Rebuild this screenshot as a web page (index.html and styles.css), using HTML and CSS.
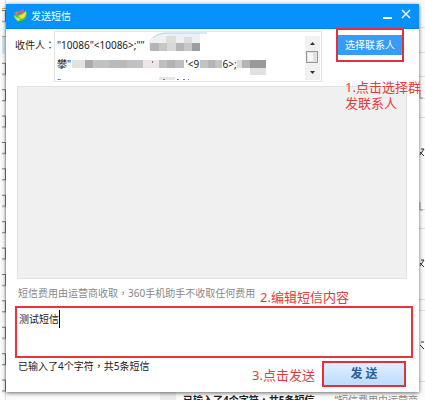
FILE: index.html
```
<!DOCTYPE html>
<html lang="zh-CN">
<head>
    <meta charset="utf-8">
    <meta name="viewport" content="width=device-width, initial-scale=1">
    <title>发送短信</title>
    <link rel="stylesheet" href="styles.css">
</head>
<body>
    <!-- list window behind the dialog -->
    <div class="backdrop" aria-hidden="true">
        <svg class="edge-left" width="6" height="400">
            <defs>
                <pattern id="ticks" x="0" y="9" width="6" height="26.4" patternUnits="userSpaceOnUse">
                    <path d="M5.5 12V26.4" stroke="#ddd"/>
                    <path d="M2 1.5H5.5V12.5H2" fill="none" stroke="#777"/>
                </pattern>
            </defs>
            <rect width="6" height="400" fill="url(#ticks)"/>
            <path d="M2 8.5H6" stroke="#e8a060"/>
            <rect x="2" y="37" width="4" height="17" fill="#cfe6f6"/>
        </svg>
        <svg class="edge-right" width="6" height="400">
            <path d="M0 27.5H6M0 52.5H6M0 76.5H6M0 98.5H6M0 117.5H6M0 209.5H6M0 228.5H6M0 299.5H6M0 310.5H6M0 381.5H6" stroke="#ddd"/>
            <path d="M1 90V98H4M1 202V210H4" fill="none" stroke="#999"/>
            <path d="M2 149H5M1 152L5 156M5 149L1 155M2 260H5M1 263L5 267M5 260L1 266M2 342H5M1 345L5 349" stroke="#333"/>
        </svg>
        <div class="edge-bottom">
            <span class="behind-status">已输入了4个字符<span class="mark" lang="zh-TW">，</span>共5条短信</span>
            <span class="behind-note">“短信费用由运营商</span>
        </div>
    </div>

    <main class="dialog">
        <header class="title-bar">
            <svg class="logo" width="13" height="14" viewBox="0 0 13 14">
                <path d="M3 3L10 0L10 4L3 6Z" fill="#c95a9d"/>
                <path d="M0 4L4 2L3 6Z" fill="#c98b45"/>
                <path d="M0 6Q5 7 12 2Q14 6 11 10Q7 15 3 12Q0 9 0 6Z" fill="#58c832"/>
                <path d="M4 7Q9 6 12 2Q13 7 8 10Z" fill="#f4e23c"/>
                <path d="M0 6Q3 10 7 9L5 12Q1 11 0 6Z" fill="#b8ec60"/>
                <path d="M3 12Q7 13 11 10Q8 15 3 12Z" fill="#25a239"/>
            </svg>
            <h1>发送短信</h1>
            <button class="window-button" type="button" aria-label="最小化">
                <svg width="10" height="12"><path d="M0 10H9" stroke="#fff" stroke-width="2"/></svg>
            </button>
            <button class="window-button" type="button" aria-label="关闭">
                <svg width="10" height="12"><path d="M1 2L9 10M9 2L1 10" stroke="#fff" stroke-width="1.4"/></svg>
            </button>
        </header>

        <form class="message-form">
            <div class="recipient-row">
                <label for="recipients">收件人<span class="mark" lang="zh-TW">：</span></label>
                <div class="recipient-box">
                    <textarea id="recipients" wrap="off">"10086"&lt;10086&gt;;""
攀"                                            '&lt;9         6&gt;;
"</textarea>
                    <!-- masked names and numbers -->
                    <svg class="mask" width="216" height="48" shape-rendering="crispEdges">
                        <path d="M94 18V9Q98 2 109 1H145V18Z" fill="#edf1f3"/>
                        <path d="M98 6Q103 1 112 1H152" fill="none" stroke="#abd5ec" shape-rendering="auto"/>
                        <path d="M95 11H104V19H95ZM121 11H129V19H121Z" fill="#b5b5b5"/>
                        <path d="M104 11H112V19H104ZM129 11H137V19H129Z" fill="#c7c7c7"/>
                        <path d="M112 11H121V19H112Z" fill="#d8d8d8"/>
                        <path d="M111 4H121V11H111ZM129 5H137V11H129Z" fill="#dedede"/>
                        <path d="M137 11H145V19H137Z" fill="#999fa3"/>
                        <path d="M17 28H30V36H17Z" fill="#e3e3e3"/>
                        <path d="M30 28H38V36H30Z" fill="#aaa"/>
                        <path d="M38 28H88V36H38Z" fill="#c2c2c2"/>
                        <path d="M54 28H72V36H54Z" fill="#bababa"/>
                        <path d="M88 28H104V36H88Z" fill="#ece6e6"/>
                        <path d="M97 29H98V31H97Z" fill="#a66"/>
                        <path d="M104 28H129V36H104Z" fill="#bfbfbf"/>
                        <path d="M112 28H120V36H112Z" fill="#b2b2b2"/>
                        <path d="M145 28H167V36H145Z" fill="#c4c4c4"/>
                        <path d="M153 28H160V36H153Z" fill="#b6b6b6"/>
                        <path d="M182 28H187V36H182Z" fill="#ddd"/>
                        <path d="M187 28H195V36H187Z" fill="#b5b5b5"/>
                        <path d="M195 28H211V36H195Z" fill="#999"/>
                        <path d="M195 36H211V43H195Z" fill="#e1e1e1"/>
                        <path d="M104 45H120V48H104Z" fill="#e6e6e6"/>
                        <path d="M108 47H110M122 47H124M128 47H130M133 47H134" stroke="#777"/>
                    </svg>
                    <svg class="scroller" width="15" height="44">
                        <rect width="15" height="44" fill="#f1f1f1"/>
                        <path d="M5 9L7.5 6L10 9ZM5 35L7.5 38L10 35Z" fill="#333"/>
                        <rect x="1.5" y="15.5" width="11" height="11" fill="#e2e2e2" stroke="#999"/>
                        <rect x="3" y="17" width="5" height="8" fill="#f7f7f7"/>
                    </svg>
                </div>
                <div class="callout">
                    <button class="contacts-button" type="button">选择联系人</button>
                </div>
            </div>

            <div class="history"></div>
            <p class="fee-note">短信费用由运营商收取<span class="mark" lang="zh-TW">，</span>360手机助手不收取任何费用</p>

            <div class="editor">
                <textarea id="message" aria-label="短信内容">测试短信</textarea>
                <span class="caret"></span>
            </div>

            <div class="footer-row">
                <p>已输入了4个字符<span class="mark" lang="zh-TW">，</span>共5条短信</p>
                <span class="hint">3.点击发送</span>
                <button class="send-button" type="button">发 送</button>
            </div>
        </form>

        <p class="hint hint-contacts">1.点击选择群<br>发联系人</p>
        <p class="hint hint-message">2.编辑短信内容</p>
    </main>
</body>
</html>
```
FILE: styles.css
```
* {
    box-sizing: border-box;
}

body {
    margin: 0;
    padding: 4px 6px 8px;
    min-height: 100vh;
    display: flex;
    overflow: hidden;
    position: relative;
    background-color: #fbfbfb;
    font-family: "Noto Sans", "Noto Sans CJK SC", sans-serif;
    font-size: 10px;
    line-height: 16px;
    color: #222;
}

h1, p {
    margin: 0;
}

button, textarea {
    font: inherit;
    color: inherit;
}

/* centred full-width punctuation */
.mark {
    font-family: "Noto Sans CJK TC", sans-serif;
    line-height: 1;
}

/* window behind */
.backdrop {
    position: absolute;
    inset: 0;
    overflow: hidden;
}

.edge-left {
    position: absolute;
    left: 0;
    top: 0;
}

.edge-right {
    position: absolute;
    right: 0;
    top: 0;
}

.edge-bottom {
    position: absolute;
    left: 160px;
    right: 0;
    bottom: 0;
    height: 8px;
    padding-left: 7px;
    border-left: 16px solid #ececec;
    display: flex;
    gap: 20px;
    overflow: hidden;
    white-space: nowrap;
}

.behind-status {
    font-weight: bold;
    color: #222;
}

.behind-note {
    color: #888;
}

/* dialog */
.dialog {
    flex: 1;
    display: flex;
    flex-direction: column;
    position: relative;
    background-color: #fff;
    box-shadow: 0 1px 4px rgba(0, 0, 0, 0.6);
}

.title-bar {
    height: 25px;
    padding: 0 6px 0 8px;
    display: flex;
    align-items: center;
    gap: 4px;
    background-color: #0792fb;
    border-bottom: 1px solid #0784e2;
    color: #fff;
}

.title-bar h1 {
    flex: 1;
    font-size: 10px;
    font-weight: normal;
}

.window-button {
    width: 14px;
    height: 20px;
    padding: 0 2px;
    border: 0;
    background: none;
}

.message-form {
    flex: 1;
    display: flex;
    flex-direction: column;
    padding: 2px 6px 5px 9px;
}

.recipient-row {
    display: flex;
    align-items: flex-start;
}

.recipient-row label {
    width: 39px;
    padding-top: 6px;
    white-space: nowrap;
}

.recipient-box {
    flex: 1;
    height: 51px;
    margin-right: 14px;
    position: relative;
    border: 1px solid #e4e4e4;
}

.recipient-box textarea {
    display: block;
    width: 100%;
    height: 48px;
    padding: 4px 2px 0;
    border: 0;
    resize: none;
    overflow: hidden;
    background: none;
    line-height: 19px;
}

.mask {
    position: absolute;
    left: 0;
    top: 0;
}

.scroller {
    position: absolute;
    right: 1px;
    top: 4px;
}

.callout {
    margin: -3px 9px 0 0;
    padding: 5px 0;
    border: 2px solid #e0303a;
}

.contacts-button {
    display: block;
    width: 64px;
    height: 20px;
    padding: 0;
    border: 0;
    background-color: #379cf5;
    color: #fff;
}

.history {
    flex: 1;
    margin: 4px 6px 6px 2px;
    background-color: #f0f0f0;
    border: 1px solid #e2e2e2;
}

.fee-note {
    margin: 0 0 5px 3px;
    color: #888;
}

.editor {
    height: 52px;
    position: relative;
    border: 2px solid #e8343a;
}

.editor textarea {
    display: block;
    width: 100%;
    height: 100%;
    padding: 3px 2px;
    border: 0;
    resize: none;
    background: none;
}

.caret {
    position: absolute;
    left: 42px;
    top: 2px;
    width: 1px;
    height: 18px;
    background-color: #000;
}

.footer-row {
    display: flex;
    align-items: flex-start;
    padding: 0 7px 0 3px;
}

.footer-row p {
    flex: 1;
}

.hint {
    font-size: 13px;
    color: #e23c40;
}

.footer-row .hint {
    margin: 9px 7px 0 0;
}

.send-button {
    width: 84px;
    height: 26px;
    margin-top: 3px;
    padding: 0;
    border: 2px solid #e0303a;
    background: linear-gradient(#e0efff, #bcdcff);
    color: #2d5f9b;
    font-size: 12px;
    font-weight: bold;
    line-height: 16px;
}

.hint-contacts {
    position: absolute;
    right: -2px;
    top: 75px;
}

.hint-message {
    position: absolute;
    left: 254px;
    bottom: 87px;
}
```
